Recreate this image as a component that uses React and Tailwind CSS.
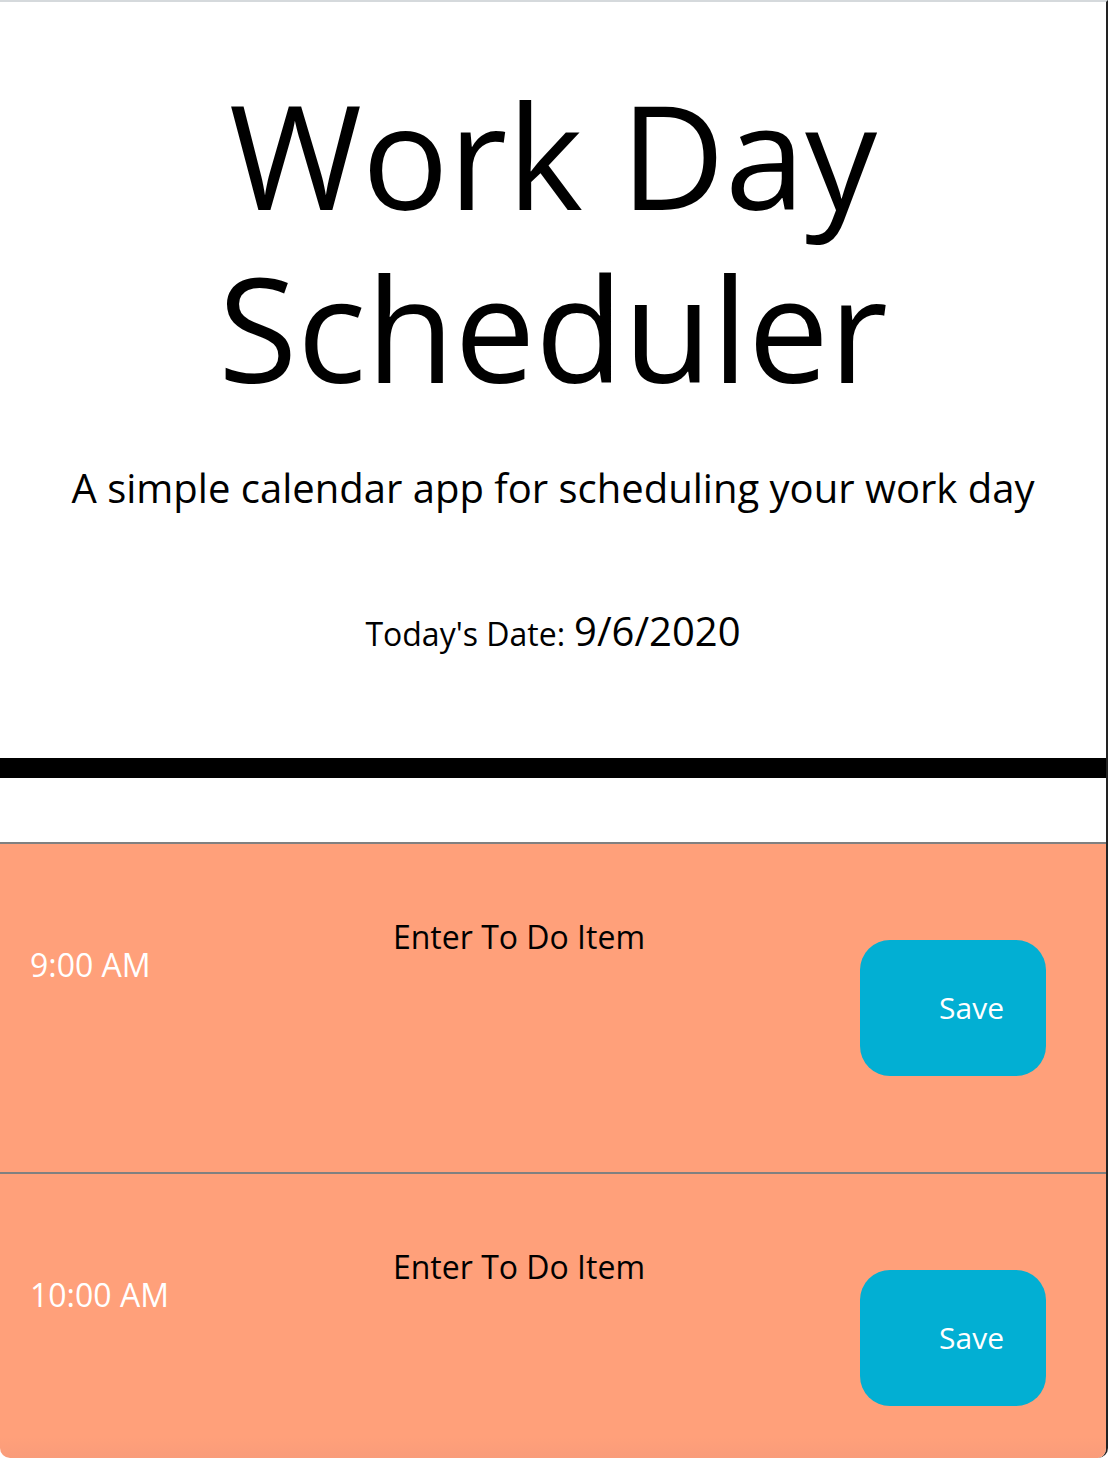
const hours = ["9:00 AM", "10:00 AM"];

const HourRow = ({ hour, last }) => {
  return (
    <div
      className={
        "flex h-[330px] border-t-2 border-[#808080] " +
        (last
          ? "bg-[linear-gradient(to_bottom,#ffa07a_80%,#ee937a_100%)]"
          : "bg-[#ffa07a]")
      }
    >
      <div className="w-[200px] pl-[30px] pt-[97px] text-[32px] leading-[48px] text-white">
        {hour}
      </div>
      <textarea
        className="w-[638px] h-[200px] resize-none bg-transparent pt-[69px] text-center text-[32px] leading-[48px] text-black placeholder:text-black outline-none"
        placeholder="Enter To Do Item"
      />
      <div className="ml-[22px] pt-[96px]">
        <button className="flex h-[136px] w-[186px] items-center justify-end rounded-[30px] bg-[#02afd3] pr-[42px] text-[30px] leading-none text-white">
          Save
        </button>
      </div>
    </div>
  );
};

const App = () => {
  return (
    <div className="h-[1458px] overflow-hidden rounded-b-[10px] border-t-2 border-r-2 border-t-[#d5d9dc] border-r-[#222] bg-white font-['Open_Sans',sans-serif] text-black">
      <header className="text-center">
        <h1 className="mt-[66px] text-[144px] leading-[1.2]">
          <span className="block">Work Day</span>
          <span className="block">Scheduler</span>
        </h1>
        <p className="mt-[44px] text-[40px] leading-[60px]">
          A simple calendar app for scheduling your work day
        </p>
        <p className="mt-[83px] flex items-baseline justify-center gap-[9px] text-[32px] leading-[60px]">
          Today's Date:
          <span className="text-[40px]">9/6/2020</span>
        </p>
      </header>
      <div className="mt-[94px] h-[20px] bg-black"></div>
      <div className="mt-[64px]">
        {hours.map((h, i) => (
          <HourRow key={h} hour={h} last={i === hours.length - 1} />
        ))}
      </div>
    </div>
  );
};

export default App;
